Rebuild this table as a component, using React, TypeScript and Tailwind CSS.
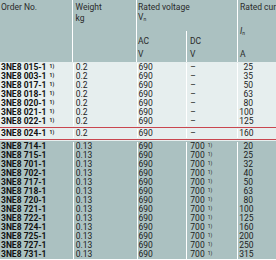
const light = [
  "3NE8 015-1",
  "3NE8 003-1",
  "3NE8 017-1",
  "3NE8 018-1",
  "3NE8 020-1",
  "3NE8 021-1",
  "3NE8 022-1",
];
const lightAmps = ["25", "35", "50", "63", "80", "100", "125"];

const gray = [
  ["3NE8 714-1", "20"],
  ["3NE8 715-1", "25"],
  ["3NE8 701-1", "32"],
  ["3NE8 702-1", "40"],
  ["3NE8 717-1", "50"],
  ["3NE8 718-1", "63"],
  ["3NE8 720-1", "80"],
  ["3NE8 721-1", "100"],
  ["3NE8 722-1", "125"],
  ["3NE8 724-1", "160"],
  ["3NE8 725-1", "200"],
  ["3NE8 727-1", "250"],
  ["3NE8 731-1", "315"],
];

function Sup() {
  return <span className="ml-[3px] align-top text-[5px] leading-[7px]">1)</span>;
}

function Row({ no, weight, dc, amps, sup, bg }: { no: string; weight: string; dc: string; amps: string; sup: boolean; bg: string }) {
  return (
    <div className={`flex h-[9px] items-center ${bg}`}>
      <div className="w-[73px] pl-[1px] font-bold text-[#111]">
        {no}
        {sup && <Sup />}
      </div>
      <div className="h-full w-[1px] bg-white" />
      <div className="w-[63px] pl-[2px]">{weight}</div>
      <div className="h-full w-[1px] bg-white" />
      <div className="w-[49px] pl-[1px]">690</div>
      <div className="h-full w-[1px] bg-white" />
      <div className="w-[50px] pl-[3px]">
        {dc}
        {dc === "700" && <Sup />}
      </div>
      <div className="h-full w-[1px] bg-white" />
      <div className="w-[38px] pl-[1px]">
        <span className="inline-block w-[14px] text-right">{amps}</span>
      </div>
    </div>
  );
}

export default function App() {
  return (
    <div className="h-[260px] w-[276px] overflow-hidden whitespace-nowrap bg-[#e6eeee] text-[8.5px] leading-[9px] text-[#1c1c1c] [font-family:Roboto,'Noto_Sans',sans-serif]">
      {/* header */}
      <div className="flex h-[62px] bg-[#abc1c1] text-[#2a2a2a]">
        <div className="w-[73px] pl-[1px] pt-[3px]">Order No.</div>
        <div className="w-[1px] bg-white" />
        <div className="flex w-[63px] flex-col pl-[2px] pt-[3px]">
          <span>Weight</span>
          <span className="mt-[2px]">kg</span>
        </div>
        <div className="w-[1px] bg-white" />
        <div className="flex w-[100px] flex-col">
          <div className="h-[31px] pl-[1px] pt-[3px]">
            <div>Rated voltage</div>
            <div className="mt-[1px]">
              V<sub className="text-[5px]">n</sub>
            </div>
          </div>
          <div className="flex flex-1">
            <div className="flex w-[49px] flex-col justify-between pb-[3px] pl-[1px] pt-[6px]">
              <span>AC</span>
              <span>V</span>
            </div>
            <div className="w-[1px] bg-white" />
            <div className="flex w-[50px] flex-col justify-between pb-[3px] pl-[3px] pt-[6px]">
              <span>DC</span>
              <span>V</span>
            </div>
          </div>
        </div>
        <div className="w-[1px] bg-white" />
        <div className="flex w-[38px] flex-col pl-[2px] pt-[3px]">
          <span>Rated current</span>
          <div className="flex flex-1 flex-col justify-between pb-[3px] pt-[15px]">
            <span>
              <i>I</i>
              <sub className="text-[5px]">n</sub>
            </span>
            <span>A</span>
          </div>
        </div>
      </div>

      {/* 0.2 kg rows */}
      <div className="pt-[1px]">
        {light.map((no, i) => (
          <Row key={no} no={no} weight="0.2" dc="–" amps={lightAmps[i]} sup bg="bg-[#e6eeee]" />
        ))}
      </div>
      <div className="mt-[1px] border-y border-[#c9464f] py-[1px]">
        <Row no="3NE8 024-1" weight="0.2" dc="–" amps="160" sup bg="bg-[#e6eeee]" />
      </div>

      {/* 0.13 kg rows */}
      <div className="mt-[1px] border-b border-white bg-[#abc1c1] pt-[1px]">
        {gray.map(([no, amps]) => (
          <Row key={no} no={no} weight="0.13" dc="700" amps={amps} sup={false} bg="bg-[#abc1c1]" />
        ))}
      </div>
    </div>
  );
}
